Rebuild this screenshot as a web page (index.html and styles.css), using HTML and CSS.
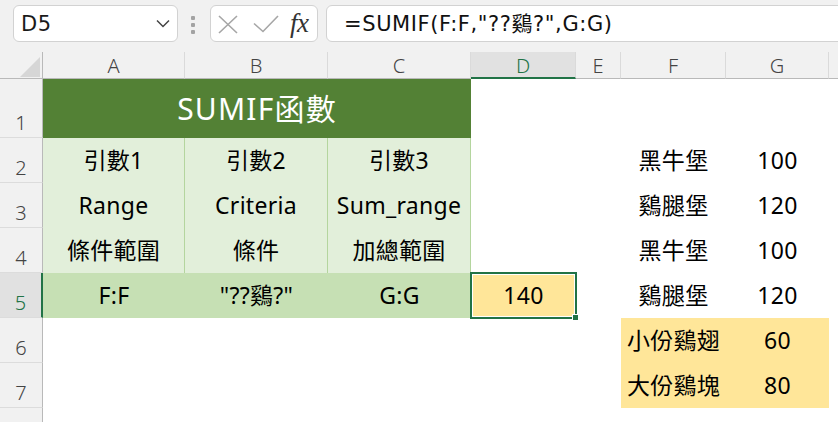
FILE: index.html
```html
<!DOCTYPE html>
<html lang="zh-Hant">
<head>
<meta charset="utf-8">
<title>SUMIF</title>
<link rel="stylesheet" href="styles.css">
</head>
<body>
<div class="topbar">
  <div class="namebox">
    <span class="nb-text">D5</span>
    <svg class="chev" width="14" height="9" viewBox="0 0 14 9"><path d="M1 1.5 L7 7.5 L13 1.5" fill="none" stroke="#444" stroke-width="1.5"/></svg>
  </div>
  <div class="dots"><i></i><i></i><i></i></div>
  <div class="fxbox">
    <svg class="ico-x" width="20" height="19" viewBox="0 0 20 19"><path d="M1 1 L19 18 M19 1 L1 18" stroke="#a6a6a6" stroke-width="1.6" fill="none"/></svg>
    <svg class="ico-check" width="26" height="18" viewBox="0 0 26 18"><path d="M1 8.5 L10 16.5 L25 1" stroke="#a6a6a6" stroke-width="1.6" fill="none"/></svg>
    <span class="fx">fx</span>
  </div>
  <div class="formula">=SUMIF(F:F,"??鷄?",G:G)</div>
</div>

<div class="sheet">
  <!-- header row -->
  <div class="corner"><svg width="42" height="26" viewBox="0 0 42 26"><path d="M20 25 L40 25 L40 5 Z" fill="#d6d6d6"/></svg></div>
  <div class="ch">A</div>
  <div class="ch">B</div>
  <div class="ch">C</div>
  <div class="ch sel">D</div>
  <div class="ch">E</div>
  <div class="ch">F</div>
  <div class="ch">G</div>
  <div class="ch last"></div>

  <!-- row 1 -->
  <div class="rh">1</div>
  <div class="c title">SUMIF函數</div>
  <div class="c"></div>
  <div class="c"></div>
  <div class="c"></div>
  <div class="c"></div>
  <div class="c"></div>

  <!-- row 2 -->
  <div class="rh">2</div>
  <div class="c lg">引數1</div>
  <div class="c lg">引數2</div>
  <div class="c lg">引數3</div>
  <div class="c"></div>
  <div class="c"></div>
  <div class="c">黑牛堡</div>
  <div class="c">100</div>
  <div class="c"></div>

  <!-- row 3 -->
  <div class="rh">3</div>
  <div class="c lg">Range</div>
  <div class="c lg">Criteria</div>
  <div class="c lg">Sum_range</div>
  <div class="c"></div>
  <div class="c"></div>
  <div class="c">鷄腿堡</div>
  <div class="c">120</div>
  <div class="c"></div>

  <!-- row 4 -->
  <div class="rh">4</div>
  <div class="c lg">條件範圍</div>
  <div class="c lg">條件</div>
  <div class="c lg">加總範圍</div>
  <div class="c"></div>
  <div class="c"></div>
  <div class="c">黑牛堡</div>
  <div class="c">100</div>
  <div class="c"></div>

  <!-- row 5 -->
  <div class="rh sel">5</div>
  <div class="c mg">F:F</div>
  <div class="c mg">"??鷄?"</div>
  <div class="c mg">G:G</div>
  <div class="c active">140<span class="handle"></span></div>
  <div class="c"></div>
  <div class="c">鷄腿堡</div>
  <div class="c">120</div>
  <div class="c"></div>

  <!-- row 6 -->
  <div class="rh">6</div>
  <div class="c"></div>
  <div class="c"></div>
  <div class="c"></div>
  <div class="c"></div>
  <div class="c"></div>
  <div class="c yl">小份鷄翅</div>
  <div class="c yl">60</div>
  <div class="c"></div>

  <!-- row 7 -->
  <div class="rh">7</div>
  <div class="c"></div>
  <div class="c"></div>
  <div class="c"></div>
  <div class="c"></div>
  <div class="c"></div>
  <div class="c yl">大份鷄塊</div>
  <div class="c yl">80</div>
  <div class="c"></div>

  <!-- row 8 (cut off at the bottom edge) -->
  <div class="rh"></div>
</div>
</body>
</html>
```

FILE: styles.css
```css
* { box-sizing: border-box; }
html, body { margin: 0; padding: 0; }
body {
  width: 838px;
  height: 422px;
  overflow: hidden;
  background: #ffffff;
  font-family: "Noto Sans", "Noto Sans CJK TC", sans-serif;
}

.topbar {
  height: 52px;
  background: #f1f1f1;
  display: flex;
  align-items: flex-start;
  padding: 5px 0 0 13px;
}
.namebox {
  width: 165px;
  height: 37px;
  background: #fff;
  border: 1px solid #d2d2d2;
  border-radius: 6px;
  display: flex;
  align-items: center;
  justify-content: space-between;
  padding: 0 7px 0 7px;
}
.nb-text {
  font-family: "DejaVu Sans", sans-serif;
  font-size: 21px;
  letter-spacing: 0.5px;
  color: #1a1a1a;
  line-height: 1;
  padding-top: 1px;
}
.chev { display: block; }
.dots {
  width: 4px;
  margin: 11px 15px 0 13px;
  display: flex;
  flex-direction: column;
  gap: 3px;
}
.dots i {
  display: block;
  width: 4px;
  height: 4px;
  background: #a3a3a3;
  border-radius: 1px;
}
.fxbox {
  width: 108px;
  height: 37px;
  background: #fff;
  border: 1px solid #d2d2d2;
  border-radius: 6px;
  display: flex;
  align-items: center;
  padding: 0 0 0 7px;
}
.ico-x { display: block; margin-top: 1px; }
.ico-check { display: block; margin-left: 15px; }
.fx {
  font-family: "Liberation Serif", "DejaVu Serif", serif;
  font-style: italic;
  font-size: 27px;
  color: #333;
  margin-left: 11px;
  line-height: 1;
  letter-spacing: -0.5px;
}
.formula {
  flex: 1;
  height: 37px;
  margin-left: 8px;
  margin-right: -8px;
  background: #fff;
  border: 1px solid #d2d2d2;
  border-radius: 6px;
  font-family: "DejaVu Sans", "Noto Sans CJK TC", sans-serif;
  font-size: 21px;
  letter-spacing: 0.6px;
  color: #111;
  padding: 6px 0 0 17px;
  line-height: 24px;
}

.sheet {
  display: grid;
  grid-template-columns: 43px 142px 143px 143px 105px 45px 105px 103px 1fr;
  grid-template-rows: 27px 59px 45px 45px 45px 45px 45px 45px 20px;
  background: #fff;
}
.corner {
  background: #f1f1f1;
  border-right: 1px solid #b9b9b9;
  border-bottom: 1px solid #b9b9b9;
}
.corner svg { display: block; }
.ch {
  background: #f1f1f1;
  border-right: 1px solid #dadada;
  border-bottom: 1px solid #b9b9b9;
  display: flex;
  align-items: center;
  justify-content: center;
  font-size: 20px;
  color: #444;
  font-weight: 300;
  padding-top: 1px;
}
.ch.last { border-right: none; }
.ch.sel {
  background: #e1e1e1;
  color: #217346;
  border-bottom: 2px solid #217346;
}
.rh {
  grid-column: 1;
  background: #f1f1f1;
  border-right: 1px solid #b9b9b9;
  border-bottom: 1px solid #dcdcdc;
  display: flex;
  align-items: flex-end;
  justify-content: center;
  font-size: 20px;
  color: #444;
  font-weight: 300;
  line-height: 1;
  padding-bottom: 4px;
}
.rh.sel {
  background: #e1e1e1;
  color: #217346;
  border-right: 2px solid #217346;
}

.c {
  display: flex;
  align-items: center;
  justify-content: center;
  font-size: 23px;
  color: #000;
  line-height: 1;
  white-space: nowrap;
  letter-spacing: 0.3px;
}
.title {
  grid-column: span 3;
  background: #538135;
  color: #fff;
  font-size: 30px;
  letter-spacing: 1.2px;
}
.lg {
  background: #e2efda;
  border-right: 1px solid #b4d59e;
}
.mg { background: #c6e0b4; }
.yl { background: #ffe699; }
.active {
  background: #ffe699;
  position: relative;
}
.active::after {
  content: "";
  position: absolute;
  top: -1px;
  left: -1px;
  right: -1px;
  bottom: -1px;
  border: 2px solid #217346;
  box-shadow: inset 0 0 0 1px #fff;
}
.handle {
  position: absolute;
  right: -3px;
  bottom: -3px;
  width: 7px;
  height: 7px;
  background: #217346;
  border: 1px solid #fff;
  z-index: 2;
}
```
